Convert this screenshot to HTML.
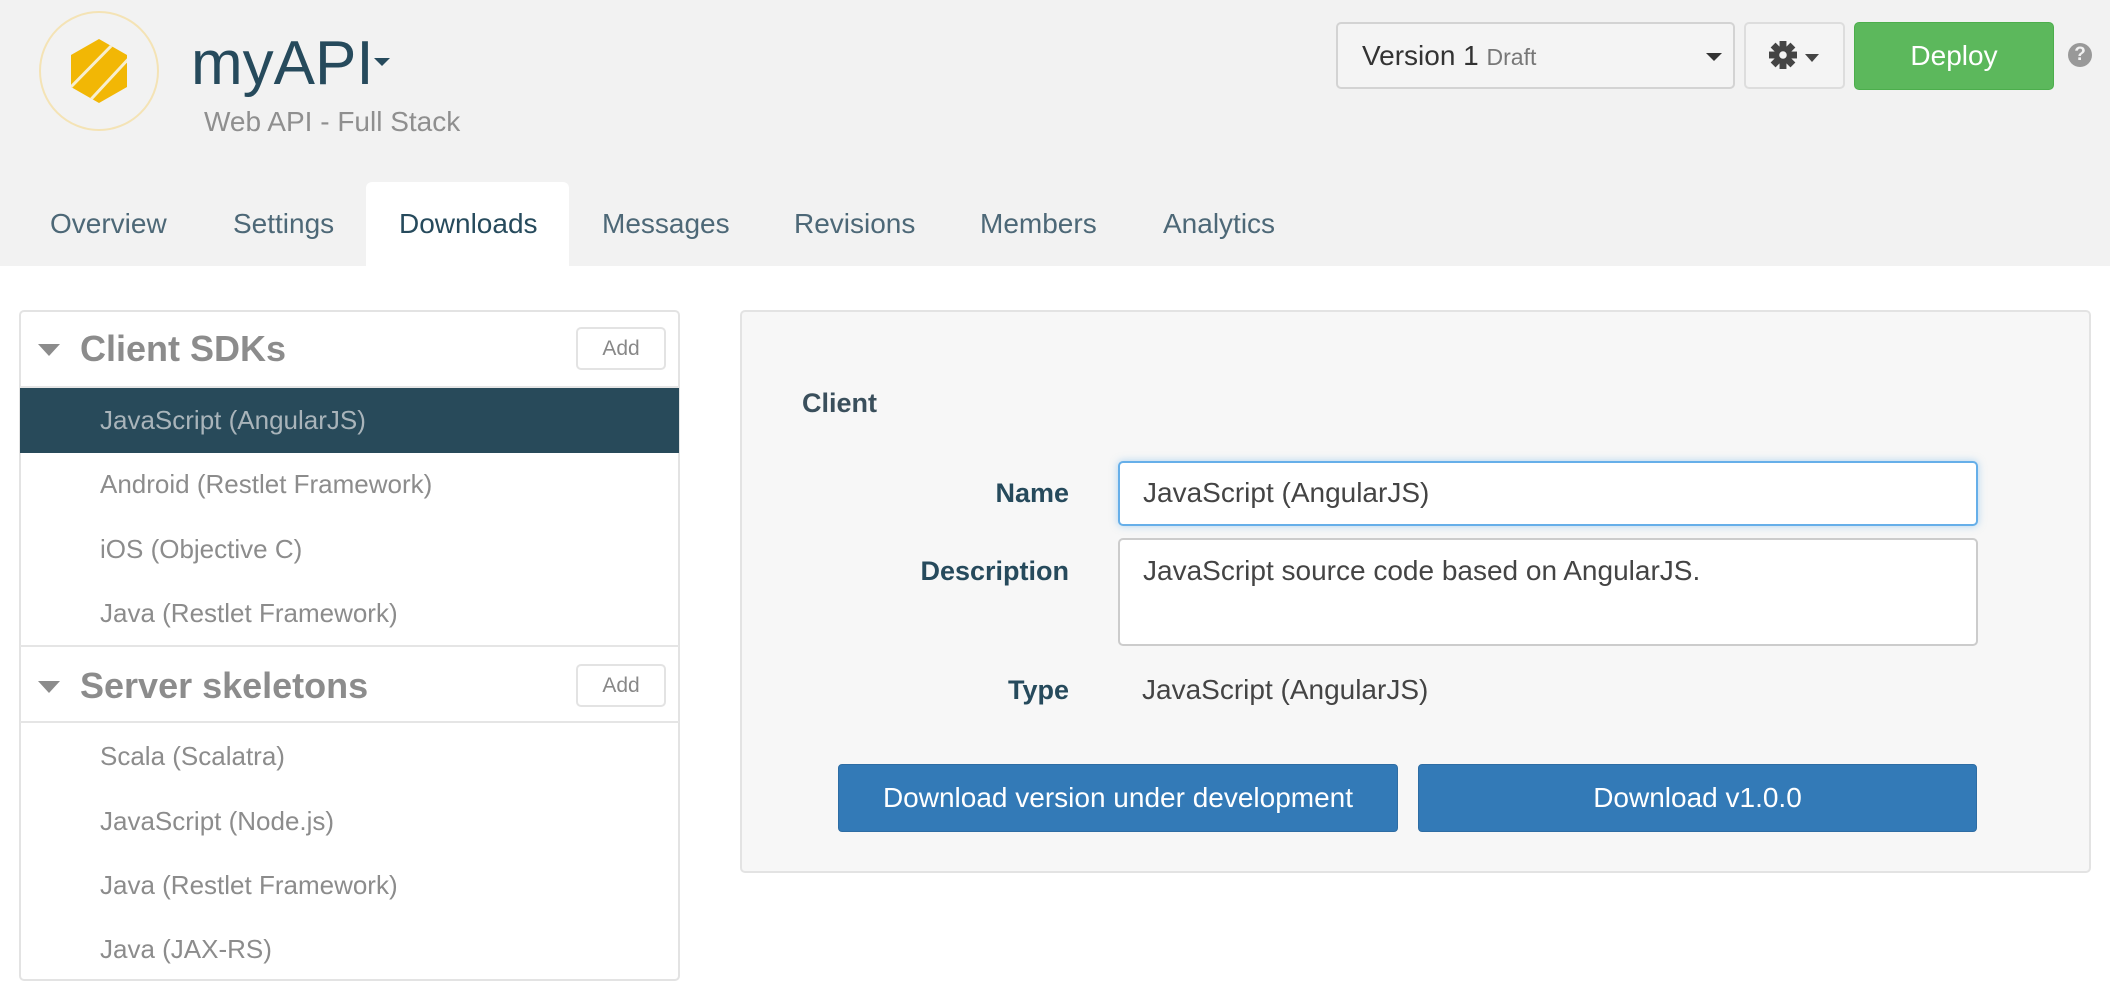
<!DOCTYPE html>
<html><head><meta charset="utf-8"><style>
*{box-sizing:border-box;margin:0;padding:0}
body{width:2110px;height:1000px;background:#fff;font-family:"Liberation Sans",sans-serif;position:relative;overflow:hidden}
.a{position:absolute}
.hdr{left:0;top:0;width:2110px;height:266px;background:#f2f2f2}
.tab{position:absolute;top:208px;font-size:28px;color:#4d6877}
.item{position:absolute;left:20px;width:659px;height:65px;font-size:26px;color:#8c8c8c;padding-left:80px;line-height:65px}
.sec{position:absolute;left:20px;width:659px;height:78px;border-bottom:2px solid #e5e5e5}
.sec .t{position:absolute;left:60px;top:0;line-height:78px;font-size:36px;font-weight:bold;color:#8c8c8c}
.sec .tri{position:absolute;left:18px;top:34px;width:0;height:0;border-left:11px solid transparent;border-right:11px solid transparent;border-top:12px solid #8c8c8c}
.add{position:absolute;left:556px;width:90px;height:43px;border:2px solid #e3e3e3;border-radius:5px;font-size:21px;color:#888;text-align:center;line-height:39px;background:#fff}
.lbl{position:absolute;right:1041px;font-size:27px;font-weight:bold;color:#264a5c}
.btn{position:absolute;top:764px;height:68px;background:#337ab7;border:1px solid #2e6da4;border-radius:4px;color:#fff;font-size:28px;text-align:center;line-height:66px}
</style></head><body>
<div class="a hdr"></div>
<svg class="a" style="left:0;top:0" width="200" height="150" viewBox="0 0 200 150">
<defs><clipPath id="h"><polygon points="99,39 127,55 127,87 99,103 71,87 71,55"/></clipPath></defs>
<circle cx="99" cy="71" r="59" fill="none" stroke="#f4e3b5" stroke-width="2"/>
<polygon points="99,39 127,55 127,87 99,103 71,87 71,55" fill="#f2b705"/>
<g clip-path="url(#h)" stroke="#f7eed0" stroke-width="3">
<line x1="66" y1="92" x2="119" y2="38"/>
<line x1="82" y1="109" x2="132" y2="55"/>
</g>
</svg>
<div class="a" style="left:191px;top:28px;font-size:62px;color:#264a5c">myAPI</div>
<div class="a" style="left:374px;top:58px;width:0;height:0;border-left:8px solid transparent;border-right:8px solid transparent;border-top:8px solid #264a5c"></div>
<div class="a" style="left:204px;top:106px;font-size:28px;color:#8f8f8f">Web API - Full Stack</div>

<div class="a" style="left:1336px;top:22px;width:399px;height:67px;border:2px solid #d3d3d3;border-radius:5px;background:#f4f4f4"></div>
<div class="a" style="left:1362px;top:40px;font-size:28px;color:#333">Version 1 <span style="font-size:23px;color:#777">Draft</span></div>
<div class="a" style="left:1706px;top:53px;border-left:8px solid transparent;border-right:8px solid transparent;border-top:8px solid #333"></div>
<div class="a" style="left:1744px;top:22px;width:101px;height:67px;border:2px solid #ddd;border-radius:5px;background:#f4f4f4"></div>
<svg class="a" style="left:1769px;top:41px" width="28" height="28" viewBox="-13 -13 26 26"><g fill="#444"><circle r="8.5"/><rect x="-3.2" y="-13" width="6.4" height="26"/><rect x="-3.2" y="-13" width="6.4" height="26" transform="rotate(45)"/><rect x="-3.2" y="-13" width="6.4" height="26" transform="rotate(90)"/><rect x="-3.2" y="-13" width="6.4" height="26" transform="rotate(135)"/></g><circle r="3.5" fill="#f4f4f4"/></svg>
<div class="a" style="left:1805px;top:54px;border-left:7px solid transparent;border-right:7px solid transparent;border-top:8px solid #444"></div>
<div class="a" style="left:1854px;top:22px;width:200px;height:68px;background:#5cb85c;border:1px solid #4cae4c;border-radius:5px;color:#fff;font-size:28px;text-align:center;line-height:66px">Deploy</div>
<div class="a" style="left:2068px;top:43px;width:24px;height:24px;border-radius:50%;background:#999;color:#f2f2f2;font-size:19px;font-weight:bold;text-align:center;line-height:24px">?</div>

<div class="a" style="left:366px;top:182px;width:203px;height:84px;background:#fff;border-radius:6px 6px 0 0"></div>
<div class="tab" style="left:50px">Overview</div>
<div class="tab" style="left:233px">Settings</div>
<div class="tab" style="left:399px;color:#264a5c">Downloads</div>
<div class="tab" style="left:602px">Messages</div>
<div class="tab" style="left:794px">Revisions</div>
<div class="tab" style="left:980px">Members</div>
<div class="tab" style="left:1163px">Analytics</div>

<div class="a" style="left:19px;top:310px;width:661px;height:671px;border:2px solid #e3e3e3;border-radius:5px"></div>
<div class="sec" style="top:310px"><div class="tri"></div><div class="t">Client SDKs</div></div>
<div class="add" style="top:327px;left:576px">Add</div>
<div class="item" style="top:388px;background:#284a5a;color:#a9b4ba">JavaScript (AngularJS)</div>
<div class="item" style="top:452px">Android (Restlet Framework)</div>
<div class="item" style="top:517px">iOS (Objective C)</div>
<div class="item" style="top:581px">Java (Restlet Framework)</div>
<div class="sec" style="top:645px;border-top:2px solid #e5e5e5"><div class="tri"></div><div class="t">Server skeletons</div></div>
<div class="add" style="top:664px;left:576px">Add</div>
<div class="item" style="top:724px">Scala (Scalatra)</div>
<div class="item" style="top:789px">JavaScript (Node.js)</div>
<div class="item" style="top:853px">Java (Restlet Framework)</div>
<div class="item" style="top:917px">Java (JAX-RS)</div>

<div class="a" style="left:740px;top:310px;width:1351px;height:563px;background:#f7f7f7;border:2px solid #e3e3e3;border-radius:5px"></div>
<div class="a" style="left:802px;top:388px;font-size:27px;font-weight:bold;color:#3a4f5c">Client</div>
<div class="lbl" style="top:478px">Name</div>
<div class="a" style="left:1118px;top:461px;width:860px;height:65px;background:#fff;border:2px solid #66afe9;border-radius:5px;box-shadow:0 0 8px rgba(102,175,233,.5)"></div>
<div class="a" style="left:1143px;top:477px;font-size:28px;color:#444">JavaScript (AngularJS)</div>
<div class="lbl" style="top:556px">Description</div>
<div class="a" style="left:1118px;top:538px;width:860px;height:108px;background:#fff;border:2px solid #ccc;border-radius:5px"></div>
<div class="a" style="left:1143px;top:555px;font-size:28px;color:#444">JavaScript source code based on AngularJS.</div>
<div class="lbl" style="top:675px">Type</div>
<div class="a" style="left:1142px;top:674px;font-size:28px;color:#444">JavaScript (AngularJS)</div>
<div class="btn" style="left:838px;width:560px">Download version under development</div>
<div class="btn" style="left:1418px;width:559px">Download v1.0.0</div>
</body></html>
